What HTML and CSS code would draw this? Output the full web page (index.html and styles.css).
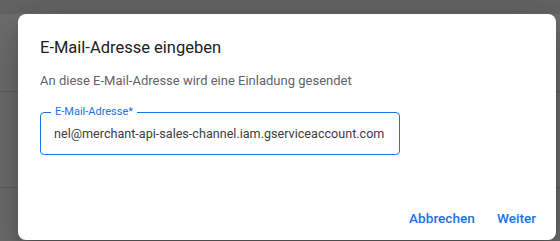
FILE: index.html
```html
<!DOCTYPE html>
<html lang="de">
<head>
<meta charset="utf-8">
<link rel="stylesheet" href="styles.css">
</head>
<body>
<div class="page">
  <div class="topbar"></div>
  <div class="row row-first"></div>
  <div class="row"></div>
  <div class="row row-last"></div>
</div>
<div class="overlay">
  <div class="dialog">
    <h1 class="title">E-Mail-Adresse eingeben</h1>
    <p class="subtitle">An diese E-Mail-Adresse wird eine Einladung gesendet</p>
    <div class="field">
      <span class="label">E-Mail-Adresse*</span>
      <div class="value">nel@merchant-api-sales-channel.iam.gserviceaccount.com</div>
    </div>
    <div class="actions">
      <button class="btn">Abbrechen</button>
      <button class="btn">Weiter</button>
    </div>
  </div>
</div>
</body>
</html>
```
FILE: styles.css
```css
html, body {
  margin: 0;
  padding: 0;
  height: 100%;
  overflow: hidden;
}
body {
  background: #6e6e6e;
  font-family: Roboto, "Noto Sans", Arial, sans-serif;
}
.page {
  display: flex;
  flex-direction: column;
  height: 100%;
}
.topbar {
  height: 14px;
  background: #646464;
}
.row {
  height: 95px;
  border-bottom: 1px solid #5d5d5d;
}
.row-first {
  height: 77px;
}
.row-last {
  flex: 1;
  height: auto;
  border-bottom: 0;
}
.overlay {
  position: absolute;
  left: 18px;
  top: 14px;
}
.dialog {
  width: 538px;
  height: 226px;
  box-sizing: border-box;
  background: #fff;
  border-radius: 8px;
  box-shadow: 0 11px 15px -7px rgba(0,0,0,.2), 0 24px 38px 3px rgba(0,0,0,.14), 0 9px 46px 8px rgba(0,0,0,.12);
  padding: 22px 12px 0 22px;
  display: flex;
  flex-direction: column;
}
.title {
  margin: 0;
  font-size: 16.5px;
  line-height: 24px;
  font-weight: 400;
  color: #202124;
}
.subtitle {
  margin: 11px 0 0;
  font-size: 13px;
  line-height: 20px;
  color: #5f6368;
}
.field {
  position: relative;
  margin-top: 21px;
  width: 360px;
  height: 43px;
  box-sizing: border-box;
  border: 1px solid #1a73e8;
  border-radius: 4px;
  display: flex;
  align-items: center;
  padding: 0 13px;
}
.label {
  position: absolute;
  left: 10px;
  top: -8px;
  padding: 0 4px;
  background: #fff;
  font-size: 11px;
  line-height: 14px;
  color: #1a73e8;
}
.value {
  font-size: 12.6px;
  color: #3c4043;
  white-space: nowrap;
}
.actions {
  margin-top: auto;
  margin-bottom: 10px;
  display: flex;
  justify-content: flex-end;
  gap: 6px;
}
.btn {
  border: 0;
  background: transparent;
  font-family: inherit;
  font-size: 13.6px;
  font-weight: 500;
  color: #1a73e8;
  padding: 0 8px;
  height: 24px;
  line-height: 24px;
  cursor: pointer;
}
```
